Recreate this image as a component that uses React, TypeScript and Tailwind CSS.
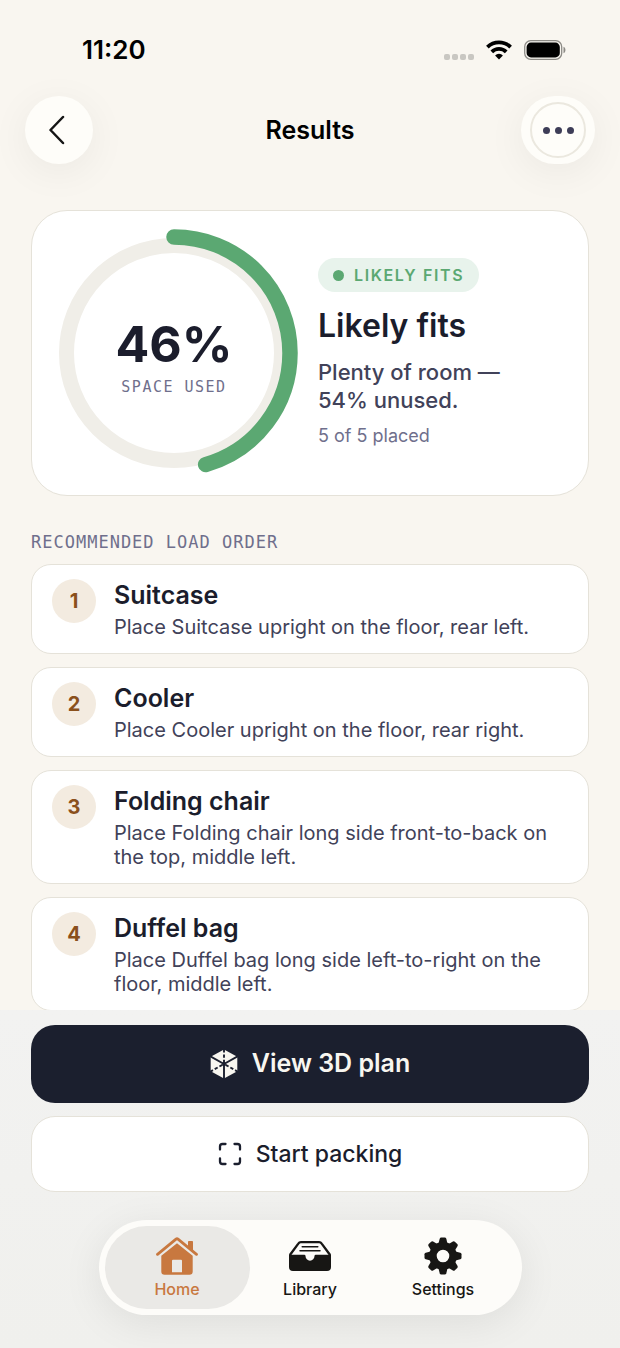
import React from 'react';

interface LoadStep {
  id: number;
  title: string;
  description: string;
}

const steps: LoadStep[] = [
  { id: 1, title: 'Suitcase', description: 'Place Suitcase upright on the floor, rear left.' },
  { id: 2, title: 'Cooler', description: 'Place Cooler upright on the floor, rear right.' },
  { id: 3, title: 'Folding chair', description: 'Place Folding chair long side front-to-back on the top, middle left.' },
  { id: 4, title: 'Duffel bag', description: 'Place Duffel bag long side left-to-right on the floor, middle left.' },
];

const TEETH = [0, 45, 90, 135, 180, 225, 270, 315];

function WifiIcon() {
  return (
    <svg width="26" height="20" viewBox="0 0 26 20" fill="none" stroke="black" strokeWidth="3.8">
      <path d="M1.4 7.2a16.6 16.6 0 0 1 23.2 0" />
      <path d="M5.8 11.9a10.2 10.2 0 0 1 14.4 0" />
      <path d="M13 19.4l-3.9-4a5.6 5.6 0 0 1 7.8 0z" fill="black" stroke="none" />
    </svg>
  );
}

function BatteryIcon() {
  return (
    <svg width="42" height="20" viewBox="0 0 42 20" fill="none">
      <rect x="0.7" y="0.7" width="37" height="18.6" rx="6" stroke="#8d8b86" strokeWidth="1.3" />
      <rect x="2.6" y="2.6" width="33.2" height="14.8" rx="4.4" fill="black" />
      <path d="M39.5 6.8c2.6 1 2.6 5.4 0 6.4z" fill="#8d8b86" />
    </svg>
  );
}

function CubeIcon() {
  return (
    <svg width="28" height="30" viewBox="0 0 28 30">
      <path d="M14 0.5L27.3 7.7V22.3L14 29.5L0.7 22.3V7.7z" fill="#f8f6f0" />
      <g stroke="#1b1f2e" strokeWidth="1.9">
        <path d="M14 15L0 7.2M14 15L28 7.2M14 15V30" />
        <path d="M14 0V15M0 22.8L14 15M28 22.8L14 15" strokeDasharray="3.4 2" />
      </g>
      <circle cx="14" cy="15" r="2" fill="#1b1f2e" />
    </svg>
  );
}

function ScanIcon() {
  return (
    <svg width="24" height="24" viewBox="0 0 24 24" fill="none" stroke="#1b1f2e" strokeWidth="2.3" strokeLinecap="round">
      <path d="M2 7.5V4.5A2.5 2.5 0 0 1 4.5 2H7.5M16.5 2H19.5A2.5 2.5 0 0 1 22 4.5V7.5M22 16.5V19.5A2.5 2.5 0 0 1 19.5 22H16.5M7.5 22H4.5A2.5 2.5 0 0 1 2 19.5V16.5" />
    </svg>
  );
}

function HomeIcon() {
  return (
    <svg width="42" height="38" viewBox="0 0 42 38">
      <path d="M32 4.8a.8.8 0 0 1 .8-.8h3.4a.8.8 0 0 1 .8.8V14l-5-4z" fill="currentColor" />
      <path d="M1.5 17.3L20 2.1a1.6 1.6 0 0 1 2 0L40.5 17.3" fill="none" stroke="currentColor" strokeWidth="2.8" strokeLinecap="round" />
      <path
        fillRule="evenodd"
        fill="currentColor"
        d="M5.3 18.8L21 6.3L36.7 18.8V34.5a3.3 3.3 0 0 1-3.3 3.3H8.6a3.3 3.3 0 0 1-3.3-3.3zM17 22.7a1 1 0 0 0-1 1V35.2H26V23.7a1 1 0 0 0-1-1z"
      />
    </svg>
  );
}

function TrayIcon() {
  return (
    <svg width="42" height="38" viewBox="0 -4 42 38">
      <path d="M1.3 15.5V13.5L9.3 2.6A3.2 3.2 0 0 1 12 1.2H30a3.2 3.2 0 0 1 2.7 1.4L40.7 13.5V15.5" fill="none" stroke="currentColor" strokeWidth="2.3" />
      <path d="M13.2 5.8H28.8M11 9.8H31" stroke="currentColor" strokeWidth="1.5" strokeLinecap="round" />
      <path d="M0 13.7H15.2q1.3 0 1.3 1.3a4.5 4.7 0 0 0 9 0q0-1.3 1.3-1.3H42V26a4 4 0 0 1-4 4H4a4 4 0 0 1-4-4z" fill="currentColor" />
    </svg>
  );
}

function GearIcon() {
  return (
    <svg width="38" height="38" viewBox="0 0 38 38">
      <circle cx="19" cy="19" r="10.1" fill="none" stroke="currentColor" strokeWidth="7.6" />
      {TEETH.map((angle) => (
        <path
          key={angle}
          d="M14.3 7.5L15.7 1.7a1.7 1.7 0 0 1 1.6-1.2h3.4a1.7 1.7 0 0 1 1.6 1.2L23.7 7.5z"
          fill="currentColor"
          transform={`rotate(${angle} 19 19)`}
        />
      ))}
    </svg>
  );
}

function SpaceRing({ percent }: { percent: number }) {
  return (
    <div className="relative flex size-[248px] shrink-0 items-center justify-center">
      <svg className="absolute inset-0" width="248" height="248" viewBox="0 0 248 248" fill="none">
        <circle cx="124" cy="124" r="107.5" stroke="#f0eee8" strokeWidth="15" />
        <circle
          cx="124"
          cy="124"
          r="116"
          stroke="#5ba872"
          strokeWidth="15.5"
          strokeLinecap="round"
          pathLength="100"
          strokeDasharray={`${percent} 100`}
          transform="rotate(-90 124 124)"
        />
      </svg>
      <div className="relative pt-[6px] text-center">
        <p className="text-[50px] leading-[62px] font-bold text-[#1b1d2c]">{Math.round(percent)}%</p>
        <p className="font-['DejaVu_Sans_Mono',monospace] text-[15px] leading-6 tracking-widest text-[#6f6f8c]">SPACE USED</p>
      </div>
    </div>
  );
}

function StepCard({ step }: { step: LoadStep }) {
  return (
    <li className="flex items-start gap-[18px] rounded-[20px] border border-[#e5e2d9] bg-white px-5 py-[14px]">
      <span className="flex size-11 shrink-0 items-center justify-center rounded-full bg-[#f3ebe0] text-xl font-bold text-[#8a501c]">
        {step.id}
      </span>
      <div className="flex flex-col gap-1">
        <h3 className="text-[25px] leading-8 font-semibold text-[#1b1d2c]">{step.title}</h3>
        <p className="text-xl leading-6 text-[#414259]">{step.description}</p>
      </div>
    </li>
  );
}

const tabs = [
  { label: 'Home', icon: <HomeIcon />, active: true },
  { label: 'Library', icon: <TrayIcon />, active: false },
  { label: 'Settings', icon: <GearIcon />, active: false },
];

export default function App() {
  return (
    <div className="flex h-screen flex-col bg-[#f9f6f0] font-['Inter',sans-serif]">
      <div className="flex h-24 shrink-0 items-center justify-between pt-1 pr-[54px] pl-[82px]">
        <span className="text-[26px] leading-8 font-semibold text-black">11:20</span>
        <div className="flex items-center gap-3">
          <div className="flex gap-[2px] pt-[14px]">
            <span className="size-[6px] rounded-[2px] bg-[#c9c7c2]" />
            <span className="size-[6px] rounded-[2px] bg-[#c9c7c2]" />
            <span className="size-[6px] rounded-[2px] bg-[#c9c7c2]" />
            <span className="size-[6px] rounded-[2px] bg-[#c9c7c2]" />
          </div>
          <WifiIcon />
          <BatteryIcon />
        </div>
      </div>

      <header className="grid shrink-0 grid-cols-[1fr_auto_1fr] items-center px-[25px]">
        <button
          type="button"
          aria-label="Back"
          className="flex size-[68px] items-center justify-center rounded-full bg-[#fefdf9] shadow-[0_8px_40px_rgba(0,0,0,0.06)]"
        >
          <svg width="20" height="30" viewBox="0 0 20 30" fill="none" stroke="#151515" strokeWidth="2.5" strokeLinecap="round" strokeLinejoin="round">
            <path d="M14 2L1.5 15L14 28" />
          </svg>
        </button>
        <h1 className="text-[25px] leading-8 font-semibold text-black">Results</h1>
        <button
          type="button"
          aria-label="More"
          className="flex h-[68px] w-[74px] items-center justify-center justify-self-end rounded-full bg-[#fefdf9] shadow-[0_8px_40px_rgba(0,0,0,0.06)]"
        >
          <span className="flex size-14 items-center justify-center gap-[5px] rounded-full border-2 border-[#ebe8df]">
            <span className="size-[7px] rounded-full bg-[#3d3d57]" />
            <span className="size-[7px] rounded-full bg-[#3d3d57]" />
            <span className="size-[7px] rounded-full bg-[#3d3d57]" />
          </span>
        </button>
      </header>

      <main className="min-h-0 flex-1 overflow-y-auto px-[31px] pt-[46px] [scrollbar-width:none]">
        <section className="flex items-center gap-5 rounded-[36px] border border-[#e5e2d9] bg-white p-[18px]">
          <SpaceRing percent={45.6} />
          <div className="flex flex-col items-start">
            <span className="flex items-center gap-[10px] rounded-full bg-[#e8f3ec] px-[15px] py-[5px] text-base leading-6 font-semibold tracking-widest text-[#5ba872]">
              <span className="size-[11px] rounded-full bg-[#5ba872]" />
              LIKELY FITS
            </span>
            <h2 className="mt-[14px] text-[32px] leading-10 font-semibold text-[#1b1d2c]">Likely fits</h2>
            <p className="mt-3 text-[22px] leading-7 font-medium text-[#414259]">
              Plenty of room —<br />
              54% unused.
            </p>
            <p className="mt-[10px] text-lg leading-6 text-[#6f6f8c]">5 of 5 placed</p>
          </div>
        </section>

        <h2 className="mt-[34px] mb-[10px] font-['DejaVu_Sans_Mono',monospace] text-[17px] leading-6 tracking-[1px] text-[#6f6f8c]">
          RECOMMENDED LOAD ORDER
        </h2>
        <ol className="flex flex-col gap-[13px]">
          {steps.map((step) => (
            <StepCard key={step.id} step={step} />
          ))}
        </ol>
      </main>

      <footer className="flex shrink-0 flex-col bg-linear-to-b from-[#f2f2f1] to-[#f0f0ed] px-[31px] pt-[15px] pb-[33px]">
        <button type="button" className="flex h-[78px] items-center justify-center gap-[14px] rounded-3xl bg-[#1b1f2e] text-[25px] font-semibold text-[#f8f6f0]">
          <CubeIcon />
          View 3D plan
        </button>
        <button
          type="button"
          className="mt-[13px] flex h-[76px] items-center justify-center gap-[14px] rounded-3xl border border-[#e5e2d9] bg-white text-[23px] font-medium text-[#1b1d2c]"
        >
          <ScanIcon />
          Start packing
        </button>
        <nav className="mt-7 flex -space-x-3 self-center rounded-full bg-[#fdfcf9] p-[6px] shadow-[0_8px_40px_rgba(0,0,0,0.08)]">
          {tabs.map((tab) => (
            <a
              key={tab.label}
              href="#"
              aria-current={tab.active ? 'page' : undefined}
              className={`flex h-[83px] w-[145px] flex-col items-center justify-center gap-1 rounded-full text-base leading-5 font-medium ${
                tab.active ? 'bg-[#eae9e6] text-[#c8783f]' : 'text-[#171614]'
              }`}
            >
              {tab.icon}
              {tab.label}
            </a>
          ))}
        </nav>
      </footer>
    </div>
  );
}
